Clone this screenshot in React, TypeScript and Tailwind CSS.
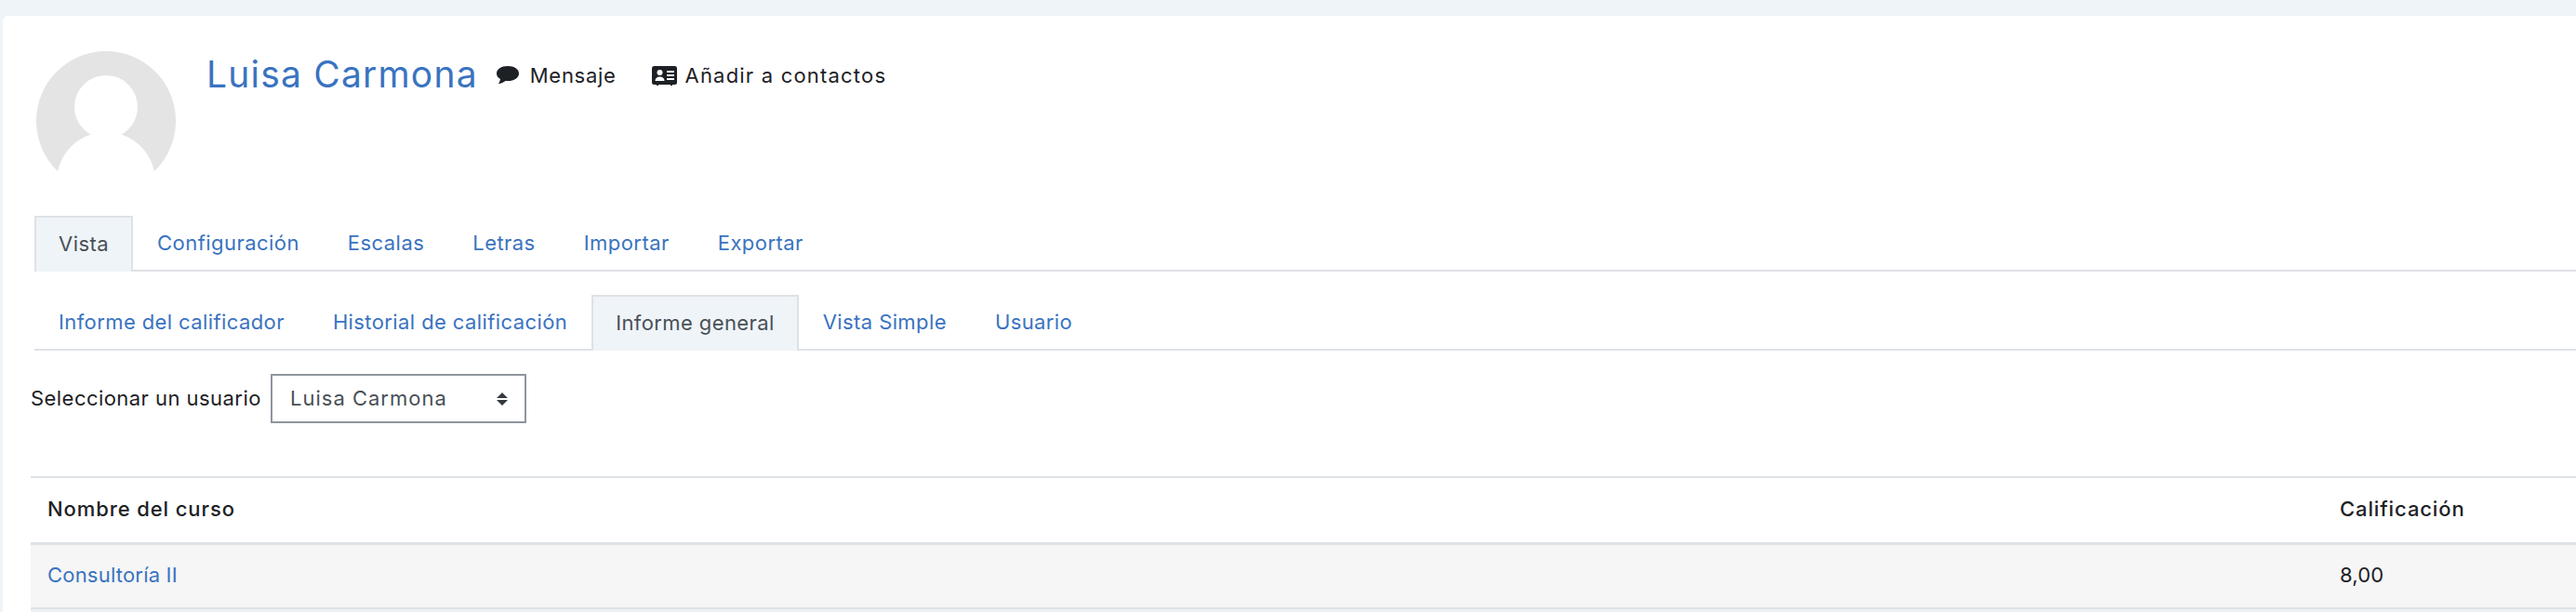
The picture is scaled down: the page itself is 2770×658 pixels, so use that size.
const font = "font-['Inter','Liberation_Sans',sans-serif]";

const mainTabs = ["Vista", "Configuración", "Escalas", "Letras", "Importar", "Exportar"];
const subTabs = ["Informe del calificador", "Historial de calificación", "Informe general", "Vista Simple", "Usuario"];

function Tabs({ items, active }: { items: string[]; active: string }) {
  return (
    <ul className="flex h-[60px] border-b-2 border-[#dee2e6]">
      {items.map((item) => (
        <li key={item} className="h-[60px]">
          {item === active ? (
            <span className="flex h-full items-center border-2 border-b-0 border-[#dee2e6] bg-[#eff4f8] px-6 pb-[2px] text-[#495057]">
              {item}
            </span>
          ) : (
            <a href="#" className="flex h-full items-center px-[26px] pb-[2px] text-[#3a73c0]">
              {item}
            </a>
          )}
        </li>
      ))}
    </ul>
  );
}

function Avatar() {
  return (
    <svg width="150" height="150" viewBox="0 0 150 150" className="shrink-0">
      <circle cx="75" cy="75" r="75" fill="#e4e4e4" />
      <circle cx="75" cy="60" r="34" fill="#fff" />
      <circle cx="75" cy="140" r="53" fill="#fff" />
      <path d="M60 85h30v10H60zM20 150h110v2H20z" fill="#fff" />
    </svg>
  );
}

function App() {
  return (
    <div className={`${font} h-[658px] overflow-hidden bg-[#eff4f8] pt-[17px] pl-[3px] text-[22px] tracking-[0.45px] text-[#1d2125]`}>
      <div className="h-full rounded-tl-[6px] bg-white">
        <div className="flex pt-[38px] pl-9">
          <Avatar />
          <h2 className="ml-[33px] text-[39px] leading-[50px] tracking-[1.200px] text-[#3a73c0]">Luisa Carmona</h2>
          <a href="#" className="ml-[19px] mt-[8px] flex h-9 items-center gap-[11px] tracking-[0.7px]">
            <svg width="26" height="22" viewBox="0 0 26 22" fill="#1d2125">
              <path d="M13 1C6 1 1 4.500 1 9c0 2.500 1.500 4.500 4 6-.3 2-1.300 4-2 5 3 0 5.500-1.500 7.500-3 .8.100 1.700.100 2.500.100 7 0 12-3.600 12-8.100S20 1 13 1z" />
            </svg>
            Mensaje
          </a>
          <a href="#" className="ml-[38px] mt-[8px] flex h-9 items-center gap-[9px] tracking-[1.200px]">
            <svg width="27" height="21" viewBox="0 0 27 21">
              <rect width="27" height="20" rx="2.500" fill="#1d2125" />
              <rect x="5" y="19.500" width="2" height="1.500" fill="#1d2125" />
              <rect x="20" y="19.500" width="2" height="1.500" fill="#1d2125" />
              <circle cx="8.500" cy="7" r="3" fill="#fff" />
              <path d="M3.500 16c0-3 2-4.500 5-4.500s5 1.500 5 4.500z" fill="#fff" />
              <path d="M16 5h8v2h-8zM16 9h8v2h-8zM16 13h8v2h-8z" fill="#fff" />
            </svg>
            Añadir a contactos
          </a>
        </div>
        <div className="mt-[27px] pl-[34px]">
          <Tabs items={mainTabs} active="Vista" />
        </div>
        <div className="mt-[25px] pl-[34px] tracking-[0.4px]">
          <Tabs items={subTabs} active="Informe general" />
        </div>
        <div className="mt-[25px] flex items-center pl-[30px]">
          <label className="w-[258px]">Seleccionar un usuario</label>
          <div className="flex h-[53px] w-[275px] items-center justify-between border-2 border-[#8f959e] pl-[19px] pr-[18px] tracking-[1px] text-[#495057]">
            Luisa Carmona
            <svg width="12" height="14" viewBox="0 0 12 14" fill="#343a40">
              <path d="M6 0l6 6H0zM6 14L0 8h12z" />
            </svg>
          </div>
        </div>
        <table className="mt-[57px] ml-[30px] w-[2737px] table-fixed border-collapse">
          <colgroup>
            <col className="w-[2466px]" />
            <col />
          </colgroup>
          <thead>
            <tr className="h-[71px] border-t-2 border-b-[3px] border-[#dee2e6] tracking-[0.9px]">
              <th className="pl-[18px] pb-[2px] text-left font-medium">Nombre del curso</th>
              <th className="pl-[17px] pb-[2px] text-left font-medium">Calificación</th>
            </tr>
          </thead>
          <tbody>
            <tr className="h-[70px] border-b-2 border-[#dee2e6] bg-[#f6f6f6]">
              <td className="pl-[18px] pb-[2px]">
                <a href="#" className="tracking-[0.2px] text-[#3a73c0]">Consultoría II</a>
              </td>
              <td className="pl-[17px] pb-[2px] tracking-[0.2px]">8,00</td>
            </tr>
            <tr className="h-[10px] bg-[#eeeff0]">
              <td colSpan={2}></td>
            </tr>
          </tbody>
        </table>
      </div>
    </div>
  );
}

export default App;
